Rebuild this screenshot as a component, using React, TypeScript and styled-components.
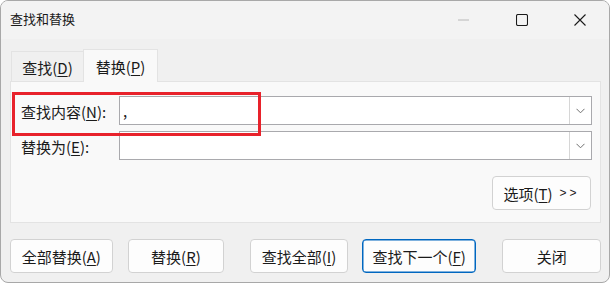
import React, { FC } from "react";
import styled, { createGlobalStyle, css } from "styled-components";

const GlobalStyle = createGlobalStyle`
  html, body {
    margin: 0;
    padding: 0;
    background: #ffffff;
  }
  body {
    font-family: "Noto Sans CJK SC", "Noto Sans", sans-serif;
    color: #1a1a1a;
  }
  * { box-sizing: border-box; }
`;

const Window = styled.div`
  width: 610px;
  height: 283px;
  display: flex;
  flex-direction: column;
  background: #f0f0f0;
  border: 1px solid #a8a8a8;
  border-radius: 8px;
  overflow: hidden;
`;

const TitleBar = styled.div`
  height: 38px;
  flex: none;
  display: flex;
  align-items: center;
  padding-left: 9px;
  background: #f3f3f3;
`;

const Title = styled.div`
  flex: 1;
  font-size: 13px;
  line-height: 1;
  color: #1a1a1a;
  margin-top: -3px;
`;

const Controls = styled.div`
  display: flex;
  height: 100%;
`;

const CtrlBtn = styled.div`
  width: 58px;
  height: 100%;
  display: flex;
  align-items: center;
  justify-content: center;
`;

const Body = styled.div`
  flex: 1;
  display: flex;
  flex-direction: column;
  padding: 9px 8px 0 9px;
`;

const TabRow = styled.div`
  display: flex;
  align-items: flex-end;
  height: 33px;
  padding-left: 1px;
`;

const Tab = styled.div<{ $active?: boolean }>`
  font-size: 15px;
  line-height: 1;
  display: flex;
  align-items: center;
  justify-content: center;
  border: 1px solid #e3e3e3;
  border-bottom: none;
  ${(p) =>
    p.$active
      ? css`
          width: 75px;
          height: 33px;
          background: #f9f9f9;
          margin-bottom: -1px;
          position: relative;
          z-index: 1;
          padding-top: 1px;
        `
      : css`
          width: 72px;
          height: 30px;
          background: #f0f0f0;
          border-right: none;
          padding-top: 2px;
        `}
`;

const Panel = styled.div`
  position: relative;
  height: 142px;
  background: #f9f9f9;
  border: 1px solid #e3e3e3;
  display: flex;
  flex-direction: column;
  padding: 14px 8px 0 10px;
`;

const FieldRow = styled.div`
  display: flex;
  align-items: center;
  height: 29px;
  margin-bottom: 6px;
`;

const Label = styled.div`
  width: 98px;
  font-size: 15px;
  line-height: 1;
  padding-top: 1px;
`;

const Combo = styled.div`
  flex: 1;
  height: 29px;
  display: flex;
  background: #ffffff;
  border: 1px solid #a9a9ad;
`;

const ComboText = styled.div`
  flex: 1;
  font-size: 15px;
  line-height: 27px;
  padding-left: 3px;
`;

const ComboArrow = styled.div`
  width: 22px;
  display: flex;
  align-items: center;
  justify-content: center;
  border-left: 1px solid #d6d6d6;
`;

const OptionsRow = styled.div`
  display: flex;
  justify-content: flex-end;
  margin-top: 10px;
  padding-right: 1px;
`;

const Button = styled.div<{ $width: number; $focus?: boolean; $gap?: number }>`
  width: ${(p) => p.$width}px;
  height: 34px;
  margin-left: ${(p) => p.$gap ?? 0}px;
  display: flex;
  align-items: center;
  justify-content: center;
  font-size: 15px;
  line-height: 1;
  background: #fdfdfd;
  border: 1px solid ${(p) => (p.$focus ? "#0067c0" : "#d2d2d2")};
  border-radius: 4px;
  ${(p) => p.$focus && css`box-shadow: inset 0 0 0 0.5px #0067c0;`}
`;

const Arrows = styled.span`
  font-family: "Liberation Sans", sans-serif;
  font-size: 12px;
  margin-left: 7px;
  letter-spacing: 3px;
`;

const ButtonRow = styled.div`
  display: flex;
  margin-top: 16px;
`;

const Highlight = styled.div`
  position: absolute;
  left: 1px;
  top: 10px;
  width: 249px;
  height: 44px;
  border: 3px solid #e8222b;
`;

const U = styled.span`
  text-decoration: underline;
  text-underline-offset: 2px;
  text-decoration-thickness: 1px;
`;

const Chevron: FC = () => (
  <svg width="9" height="6" viewBox="0 0 9 6">
    <path d="M0.5 0.8 L4.5 4.8 L8.5 0.8" fill="none" stroke="#707070" strokeWidth="1" />
  </svg>
);

const App: FC = () => (
  <>
    <GlobalStyle />
    <Window>
      <TitleBar>
        <Title>查找和替换</Title>
        <Controls>
          <CtrlBtn>
            <svg width="12" height="2" viewBox="0 0 12 2">
              <line x1="0" y1="1" x2="11" y2="1" stroke="#b8b8b8" strokeWidth="1" />
            </svg>
          </CtrlBtn>
          <CtrlBtn>
            <svg width="12" height="12" viewBox="0 0 12 12">
              <rect x="0.5" y="0.5" width="11" height="11" rx="1.5" fill="none" stroke="#1a1a1a" strokeWidth="1.1" />
            </svg>
          </CtrlBtn>
          <CtrlBtn>
            <svg width="12" height="12" viewBox="0 0 12 12">
              <path d="M0.5 0.5 L11.5 11.5 M11.5 0.5 L0.5 11.5" stroke="#1a1a1a" strokeWidth="1.1" />
            </svg>
          </CtrlBtn>
        </Controls>
      </TitleBar>
      <Body>
        <TabRow>
          <Tab>
            查找(<U>D</U>)
          </Tab>
          <Tab $active>
            替换(<U>P</U>)
          </Tab>
        </TabRow>
        <Panel>
          <FieldRow>
            <Label>
              查找内容(<U>N</U>):
            </Label>
            <Combo>
              <ComboText>,</ComboText>
              <ComboArrow>
                <Chevron />
              </ComboArrow>
            </Combo>
          </FieldRow>
          <FieldRow>
            <Label>
              替换为(<U>E</U>):
            </Label>
            <Combo>
              <ComboText />
              <ComboArrow>
                <Chevron />
              </ComboArrow>
            </Combo>
          </FieldRow>
          <OptionsRow>
            <Button $width={99}>
              选项(<U>T</U>)<Arrows>&gt;&gt;</Arrows>
            </Button>
          </OptionsRow>
          <Highlight />
        </Panel>
        <ButtonRow>
          <Button $width={103}>
            全部替换(<U>A</U>)
          </Button>
          <Button $width={97} $gap={15}>
            替换(<U>R</U>)
          </Button>
          <Button $width={98} $gap={26}>
            查找全部(<U>I</U>)
          </Button>
          <Button $width={115} $gap={14} $focus>
            查找下一个(<U>F</U>)
          </Button>
          <Button $width={99} $gap={26}>
            关闭
          </Button>
        </ButtonRow>
      </Body>
    </Window>
  </>
);

export default App;
